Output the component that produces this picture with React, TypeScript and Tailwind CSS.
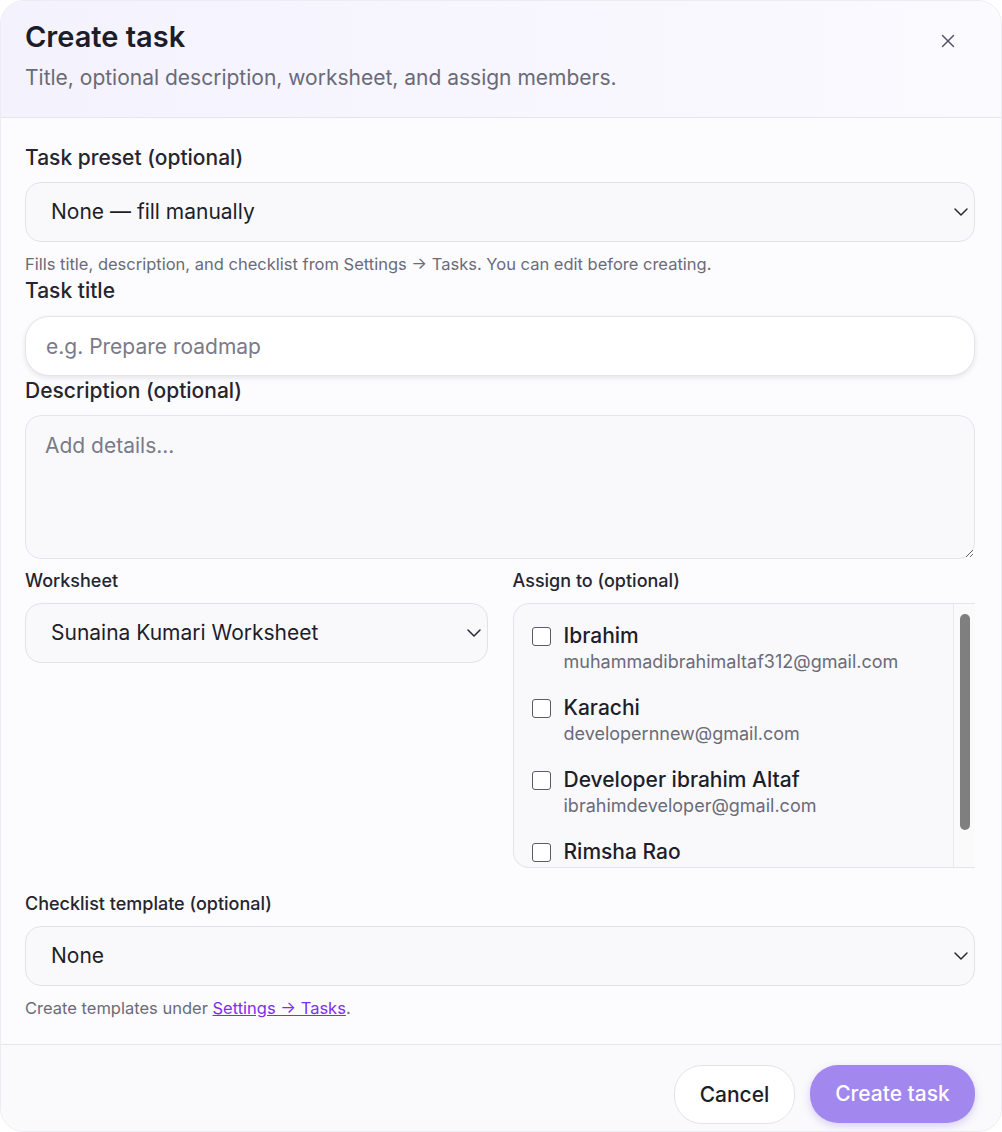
import React from 'react';
import { X, ChevronDown } from 'lucide-react';

const members = [
  { name: 'Ibrahim', email: 'muhammadibrahimaltaf312@gmail.com' },
  { name: 'Karachi', email: 'developernnew@gmail.com' },
  { name: 'Developer ibrahim Altaf', email: 'ibrahimdeveloper@gmail.com' },
  { name: 'Rimsha Rao', email: '' },
];

const SelectBox: React.FC<{ value: string; className?: string }> = ({ value, className = '' }) => (
  <div
    className={`flex h-[60px] items-center justify-between rounded-[16px] border border-[#e1e1ea] bg-[#f9f9fc] pl-[25px] pr-[1px] text-[21px] text-[#1e1e2a] ${className}`}
  >
    <span>{value}</span>
    <ChevronDown className="h-[24px] w-[24px] text-[#2a2a35]" strokeWidth={1.5} />
  </div>
);

export default function App() {
  return (
    <div className="min-h-screen bg-white" style={{ fontFamily: 'Inter, "Noto Sans", sans-serif' }}>
      <div className="flex h-[1132px] w-[1002px] flex-col overflow-hidden rounded-[24px] border border-[#ececf3] bg-[#fcfcfe]">
        {/* header */}
        <div className="flex items-start justify-between border-b border-[#e6e4ef] bg-gradient-to-r from-[#f4f2fd] to-[#fbfaff] pb-[25px] pl-[24px] pr-[26px] pt-[18px]">
          <div>
            <h2 className="text-[29px] font-semibold leading-[36px] text-[#1c1c2b]">Create task</h2>
            <p className="mt-[9px] text-[21px] leading-[28px] text-[#6a6a78]">
              Title, optional description, worksheet, and assign members.
            </p>
          </div>
          <button className="mr-[16px] mt-[11px] text-[#55556a]">
            <X className="h-[22px] w-[22px]" strokeWidth={1.6} />
          </button>
        </div>

        {/* body */}
        <div className="flex flex-col pb-[26px] pl-[24px] pr-[26px] pt-[26px]">
          <label className="text-[21px] font-medium leading-[28px] text-[#25252f]">Task preset (optional)</label>
          <SelectBox value="None — fill manually" className="mt-[10px]" />
          <p className="mt-[12px] text-[16.5px] leading-[20px] text-[#6b6b78]">
            Fills title, description, and checklist from Settings → Tasks. You can edit before creating.
          </p>

          <label className="mt-[3px] text-[21px] font-medium leading-[28px] text-[#25252f]">Task title</label>
          <input
            className="mt-[11px] h-[60px] rounded-[24px] border border-[#e4e4ec] bg-white px-[20px] text-[21px] text-[#1e1e2a] shadow-[0_2px_5px_rgba(30,30,60,0.1)] outline-none placeholder:text-[#7a7a88]"
            placeholder="e.g. Prepare roadmap"
          />

          <label className="mt-[1px] text-[21px] font-medium leading-[28px] text-[#25252f]">Description (optional)</label>
          <textarea
            className="mt-[10px] h-[144px] rounded-[16px] border border-[#e4e4ec] bg-[#f9f9fc] px-[19px] py-[16px] text-[21px] leading-[28px] text-[#1e1e2a] outline-none placeholder:text-[#7a7a88]"
            placeholder="Add details..."
          />

          <div className="mt-[10px] grid grid-cols-2 gap-[25px]">
            <div className="flex flex-col">
              <label className="text-[18px] font-medium leading-[24px] text-[#25252f]">Worksheet</label>
              <SelectBox value="Sunaina Kumari Worksheet" className="mt-[10px]" />
            </div>
            <div className="flex flex-col">
              <label className="text-[18px] font-medium leading-[24px] text-[#25252f]">Assign to (optional)</label>
              <div className="mt-[10px] flex h-[265px] overflow-hidden rounded-l-[16px] border-y border-l border-[#e4e4ec] bg-[#f9f9fc]">
                <div className="flex flex-1 flex-col gap-[20px] overflow-hidden pl-[18px] pt-[18px]">
                  {members.map((m) => (
                    <div key={m.name} className="flex items-start gap-[13px]">
                      <span className="mt-[5px] h-[19px] w-[19px] shrink-0 rounded-[3px] border-[1.5px] border-[#5a5a66] bg-white" />
                      <div className="flex flex-col">
                        <span className="text-[21px] font-medium leading-[28px] text-[#1e1e2a]">{m.name}</span>
                        {m.email && <span className="text-[18px] leading-[24px] text-[#6b6b78]">{m.email}</span>}
                      </div>
                    </div>
                  ))}
                </div>
                <div className="flex w-[22px] shrink-0 justify-center border-l border-[#e8e8ee] bg-[#fafafa] pt-[10px]">
                  <div className="h-[216px] w-[10px] rounded-full bg-[#7f7f7f]" />
                </div>
              </div>
            </div>
          </div>

          <label className="mt-[24px] text-[18px] font-medium leading-[24px] text-[#25252f]">Checklist template (optional)</label>
          <SelectBox value="None" className="mt-[10px]" />
          <p className="mt-[12px] text-[16.5px] leading-[20px] text-[#6b6b78]">
            Create templates under{' '}
            <a className="text-[#7c2ff0] underline" href="#">
              Settings → Tasks
            </a>
            .
          </p>
        </div>

        {/* footer */}
        <div className="flex flex-1 items-start justify-end gap-[15px] border-t border-[#e6e4ef] bg-[#fafafc] px-[26px] pt-[20px]">
          <button className="h-[59px] w-[121px] rounded-[28px] border border-[#e2e2ea] bg-white text-[21px] font-medium text-[#1e1e2a]">
            Cancel
          </button>
          <button className="h-[58px] w-[165px] rounded-[28px] bg-[#a287ee] text-[21px] font-medium text-white shadow-[0_3px_8px_rgba(140,110,230,0.3)]">
            Create task
          </button>
        </div>
      </div>
    </div>
  );
}
